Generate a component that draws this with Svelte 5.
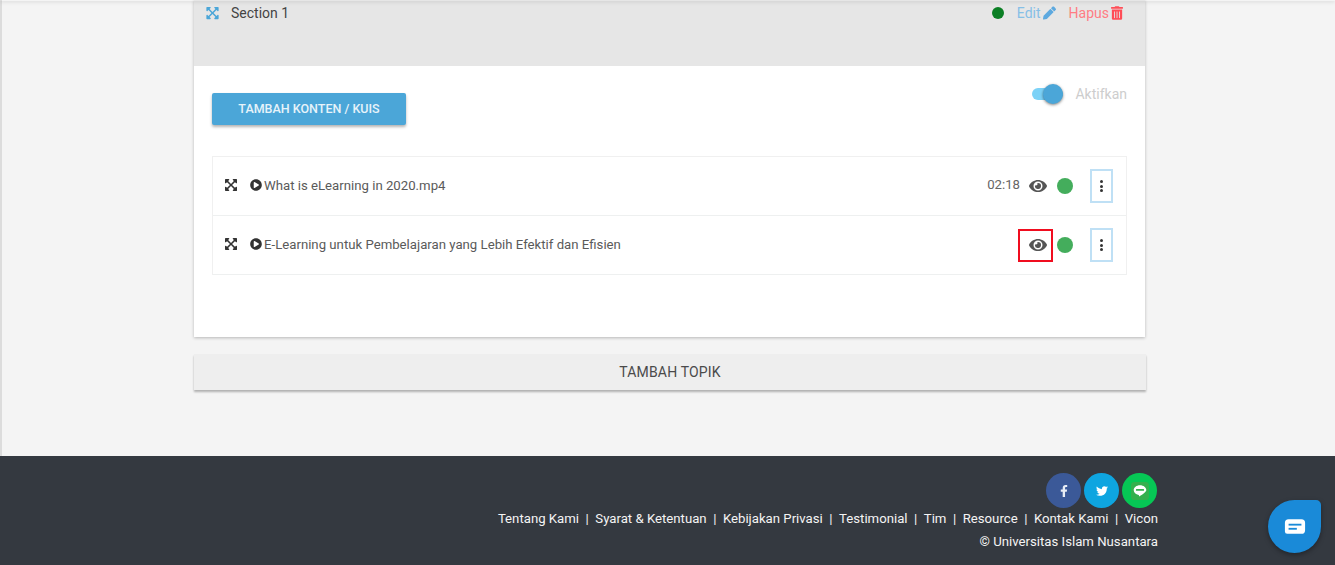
<script>
  const expand = 'M448.1 344v112c0 13.3-10.7 24-24 24h-112c-21.4 0-32.1-25.9-17-41l36.2-36.2L224 295.6 116.8 402.9 153 439c15.1 15.1 4.4 41-17 41H24c-13.3 0-24-10.7-24-24V344c0-21.4 25.9-32.1 41-17l36.2 36.2L184.5 256 77.2 148.7 41 185c-15.1 15.1-41 4.4-41-17V56c0-13.3 10.7-24 24-24h112c21.4 0 32 25.9 17 41l-36.2 36.2L224 216.4l107.3-107.3L295.1 73c-15.1-15.1-4.4-41 17-41h112c13.3 0 24 10.7 24 24v112c0 21.4-25.9 32.1-41 17l-36.2-36.2L263.6 256l107.3 107.3 36.2-36.2c15.1-15.2 41-4.5 41 16.9z';
  const play = 'M256 8C119 8 8 119 8 256s111 248 248 248 248-111 248-248S393 8 256 8zm115.7 272l-176 101c-15.8 8.8-35.7-2.5-35.7-20.9V152c0-18.3 19.8-29.7 35.7-20.9l176 107c16.4 9.2 16.4 32.9 0 41.9z';
  const eye = 'M572.52 241.4C518.29 135.59 410.93 64 288 64S57.68 135.64 3.48 241.41a32.35 32.35 0 0 0 0 29.19C57.71 376.41 165.07 448 288 448s230.32-71.64 284.52-177.41a32.35 32.35 0 0 0 0-29.19zM288 400a144 144 0 1 1 144-144 143.93 143.93 0 0 1-144 144zm0-240a95.31 95.31 0 0 0-25.31 3.79 47.85 47.85 0 0 1-66.9 66.9A95.78 95.78 0 1 0 288 160z';

  const items = [
    { title: 'What is eLearning in 2020.mp4', time: '02:18' },
    { title: 'E-Learning untuk Pembelajaran yang Lebih Efektif dan Efisien', time: '', marked: true }
  ];
  const links = ['Tentang Kami', 'Syarat & Ketentuan', 'Kebijakan Privasi', 'Testimonial', 'Tim', 'Resource', 'Kontak Kami', 'Vicon'];
</script>

<div class="page">
  <main>
    <section class="card">
      <header>
        <svg class="move" viewBox="0 0 448 512"><path d={expand} /></svg>
        <span class="section-name">Section 1</span>
        <span class="status"></span>
        <a class="edit" href="#edit">Edit
          <svg viewBox="0 0 512 512"><path d="M497.9 142.1l-46.1 46.1c-4.7 4.7-12.3 4.7-17 0l-111-111c-4.7-4.7-4.7-12.3 0-17l46.1-46.1c18.7-18.7 49.1-18.7 67.9 0l60.1 60.1c18.8 18.7 18.8 49.1 0 67.9zM284.2 99.8L21.6 362.4.4 483.9c-2.9 16.4 11.4 30.6 27.8 27.8l121.5-21.3 262.6-262.6c4.7-4.7 4.7-12.3 0-17l-111-111c-4.8-4.7-12.4-4.7-17.1 0z" /></svg>
        </a>
        <a class="remove" href="#hapus">Hapus
          <svg viewBox="0 0 448 512"><path d="M32 464a48 48 0 0 0 48 48h288a48 48 0 0 0 48-48V128H32zm272-256a16 16 0 0 1 32 0v224a16 16 0 0 1-32 0zm-96 0a16 16 0 0 1 32 0v224a16 16 0 0 1-32 0zm-96 0a16 16 0 0 1 32 0v224a16 16 0 0 1-32 0zM432 32H312l-9.4-18.7A24 24 0 0 0 281.1 0H166.8a23.72 23.72 0 0 0-21.4 13.3L136 32H16A16 16 0 0 0 0 48v32a16 16 0 0 0 16 16h416a16 16 0 0 0 16-16V48a16 16 0 0 0-16-16z" /></svg>
        </a>
      </header>

      <div class="card-body">
        <div class="toolbar">
          <button class="add-content">TAMBAH KONTEN / KUIS</button>
          <div class="toggle">
            <span class="track"><span class="knob"></span></span>
            <span class="toggle-label">Aktifkan</span>
          </div>
        </div>

        <ul class="list">
          {#each items as item}
            <li>
              <svg class="drag" viewBox="0 0 448 512"><path d={expand} /></svg>
              <svg class="play" viewBox="0 0 512 512"><path d={play} /></svg>
              <span class="title">{item.title}</span>
              {#if item.time}<span class="time">{item.time}</span>{/if}
              <span class="eye-wrap" class:marked={item.marked}>
                <svg class="eye" viewBox="0 0 576 512"><path d={eye} /></svg>
              </span>
              <span class="dot"></span>
              <button class="kebab" aria-label="menu"><i></i><i></i><i></i></button>
            </li>
          {/each}
        </ul>
      </div>
    </section>

    <button class="add-topic">TAMBAH TOPIK</button>
  </main>

  <footer>
    <div class="social">
      <span class="round fb">
        <svg viewBox="0 0 320 512"><path d="M279.14 288l14.22-92.66h-88.91v-60.13c0-25.35 12.42-50.06 52.24-50.06h40.42V6.26S260.43 0 225.36 0c-73.22 0-121.08 44.38-121.08 124.72v70.62H22.89V288h81.39v224h100.17V288z" /></svg>
      </span>
      <span class="round tw">
        <svg viewBox="0 0 512 512"><path d="M459.37 151.716c.325 4.548.325 9.097.325 13.645 0 138.72-105.583 298.558-298.558 298.558-59.452 0-114.68-17.219-161.137-47.106 8.447.974 16.568 1.299 25.34 1.299 49.055 0 94.213-16.568 130.274-44.832-46.132-.975-84.792-31.188-98.112-72.772 6.498.974 12.995 1.624 19.818 1.624 9.421 0 18.843-1.3 27.614-3.573-48.081-9.747-84.143-51.98-84.143-102.985v-1.299c13.969 7.797 30.214 12.67 47.431 13.319-28.264-18.843-46.781-51.005-46.781-87.391 0-19.492 5.197-37.36 14.294-52.954 51.655 63.675 129.3 105.258 216.365 109.807-1.624-7.797-2.599-15.918-2.599-24.04 0-57.828 46.782-104.934 104.934-104.934 30.213 0 57.502 12.67 76.67 33.137 23.715-4.548 46.456-13.32 66.599-25.34-7.798 24.366-24.366 44.833-46.132 57.827 21.117-2.273 41.584-8.122 60.426-16.243-14.292 20.791-32.161 39.308-52.628 54.253z" /></svg>
      </span>
      <span class="round line">
        <svg viewBox="0 0 20 20">
          <rect width="20" height="20" rx="4" fill="#35b04e" />
          <path d="M10 3.5c-4 0-7 2.4-7 5.5 0 2.7 2.3 4.9 5.5 5.4.5.1.4.5.3 1.2 0 .4.2.5.6.3 1.7-1 4-2.5 5.6-3.9 1.3-1 2-2 2-3C17 5.9 14 3.5 10 3.5z" fill="#fff" />
          <rect x="5.5" y="7.8" width="9" height="2" rx=".6" fill="#35b04e" />
        </svg>
      </span>
    </div>
    <nav>
      {#each links as link, i}
        {#if i > 0}<span class="sep">|</span>{/if}
        <a href="#link">{link}</a>
      {/each}
    </nav>
    <div class="copy">© Universitas Islam Nusantara</div>
  </footer>

  <button class="chat" aria-label="chat">
    <svg viewBox="0 0 24 18">
      <path d="M5 1h14a4 4 0 0 1 4 4v8a4 4 0 0 1-4 4H3.5A2.5 2.5 0 0 1 1 14.5V5a4 4 0 0 1 4-4z" fill="#fff" />
      <rect x="5" y="6" width="14" height="2" fill="#1a8ad8" />
      <rect x="5" y="10.5" width="9" height="2" fill="#1a8ad8" />
    </svg>
  </button>
</div>

<style>
  :global(body) {
    margin: 0;
    font-family: Roboto, "Liberation Sans", sans-serif;
    background: #f4f4f4;
  }
  .page {
    height: 565px;
    overflow: hidden;
    position: relative;
  }
  .page::before {
    content: '';
    position: absolute;
    top: 0;
    left: 0;
    right: 0;
    height: 1px;
    box-shadow: 0 0 4px rgba(0, 0, 0, .35);
  }
  main {
    height: 456px;
    box-sizing: border-box;
    padding-left: 192px;
    border-left: 2px solid #dcdcdc;
  }
  .card {
    width: 951px;
    background: #fff;
    box-shadow: 0 1px 3px rgba(0, 0, 0, .25);
  }
  header {
    height: 66px;
    box-sizing: border-box;
    background: #e6e6e6;
    display: flex;
    align-items: flex-start;
    padding: 5px 22px 0 12px;
    font-size: 14px;
    line-height: 16px;
  }
  header svg {
    height: 14px;
    display: block;
  }
  .move {
    fill: #4ba6d8;
    width: 13px;
    margin-top: 1px;
  }
  .section-name {
    margin-left: 12px;
    margin-right: auto;
    color: #444;
  }
  .status {
    width: 12px;
    height: 12px;
    margin-top: 2px;
    border-radius: 50%;
    background: #0b7f24;
  }
  .edit, .remove {
    display: flex;
    align-items: center;
    text-decoration: none;
  }
  .edit {
    gap: 2px;
    margin-left: 13px;
    color: #86bfe6;
  }
  .edit svg {
    width: 13px;
    fill: #5da9df;
  }
  .remove {
    gap: 2px;
    margin-left: 13px;
    color: #ff7d84;
  }
  .remove svg {
    width: 12px;
    fill: #ff4d57;
  }
  .card-body {
    height: 271px;
    box-sizing: border-box;
    padding: 20px 18px 0;
  }
  .toolbar {
    display: flex;
    justify-content: space-between;
    align-items: flex-start;
    height: 70px;
  }
  .add-content {
    width: 194px;
    height: 32px;
    margin-top: 7px;
    border: 0;
    border-radius: 2px;
    background: #4ba6d8;
    color: #e6f3fa;
    font: 500 12.5px/32px Roboto, sans-serif;
    box-shadow: 0 2px 3px rgba(0, 0, 0, .3);
    padding: 0;
  }
  .toggle {
    display: flex;
    align-items: center;
    gap: 12px;
  }
  .track {
    display: block;
    position: relative;
    width: 31px;
    height: 12px;
    border-radius: 6px;
    background: #7cd2f7;
  }
  .knob {
    position: absolute;
    right: 0;
    top: -4px;
    width: 20px;
    height: 20px;
    border-radius: 50%;
    background: #4ba6d8;
    box-shadow: 0 1px 3px rgba(0, 0, 0, .5);
  }
  .toggle-label {
    font-size: 14px;
    color: #cdcdcd;
  }
  .list {
    list-style: none;
    margin: 0;
    padding: 0;
    width: 915px;
    border: 1px solid #f0f0f0;
    border-bottom: 0;
    box-sizing: border-box;
  }
  li {
    height: 59px;
    box-sizing: border-box;
    border-bottom: 1px solid #eef0f0;
    display: flex;
    align-items: center;
    padding: 0 13px 0 12px;
    font-size: 13.2px;
    color: #5a5a5a;
  }
  .drag {
    width: 12px;
    height: 14px;
    fill: #333;
    margin-top: -2px;
  }
  .play {
    width: 12px;
    height: 12px;
    fill: #333;
    margin-left: 13px;
    margin-right: 2px;
    margin-top: -2px;
  }
  .title {
    margin-right: auto;
    margin-top: -2px;
  }
  .time {
    color: #666;
    margin-top: -3px;
    margin-right: -1px;
  }
  .eye-wrap {
    display: flex;
    align-items: center;
    justify-content: center;
    width: 35px;
    height: 33px;
    box-sizing: border-box;
    padding-left: 4px;
    margin-right: 4px;
    margin-left: -1px;
  }
  .eye-wrap.marked {
    outline: 2px solid #f00d1f;
    outline-offset: -2px;
  }
  .eye {
    width: 18px;
    height: 16px;
    fill: #555;
  }
  .dot {
    width: 16px;
    height: 16px;
    border-radius: 50%;
    background: #44ad5c;
    margin-right: 17px;
  }
  .kebab {
    width: 23px;
    height: 34px;
    box-sizing: border-box;
    padding: 0;
    border: 2px solid #bfe0f5;
    background: #fff;
    display: flex;
    flex-direction: column;
    align-items: center;
    justify-content: center;
    gap: 1.5px;
  }
  .kebab i {
    width: 3px;
    height: 3px;
    border-radius: 50%;
    background: #333;
  }
  .add-topic {
    display: block;
    width: 952px;
    height: 36px;
    margin-top: 17px;
    border: 0;
    padding: 1px 0 0;
    background: #eee;
    color: #4a4a4a;
    font: 400 14px/35px Roboto, sans-serif;
    letter-spacing: .17px;
    box-shadow: 0 2px 2px rgba(0, 0, 0, .28);
  }
  footer {
    height: 109px;
    box-sizing: border-box;
    background: #343940;
    padding: 17px 177px 0 0;
    display: flex;
    flex-direction: column;
    align-items: flex-end;
    color: #f4f4f4;
    font-size: 13.2px;
  }
  .social {
    display: flex;
    gap: 3px;
    margin-right: 1px;
  }
  .round {
    width: 35px;
    height: 35px;
    border-radius: 50%;
    display: flex;
    align-items: center;
    justify-content: center;
  }
  .fb { background: #3b5998; }
  .tw { background: #0ea5e0; }
  .line { background: #06c755; }
  .fb svg {
    height: 12px;
    width: 8px;
    fill: #e8edf5;
  }
  .tw svg {
    width: 12px;
    height: 12px;
    fill: #fff;
  }
  .line svg {
    width: 18px;
    height: 18px;
  }
  nav {
    display: flex;
    align-items: center;
    margin-top: 3px;
    line-height: 16px;
  }
  nav a {
    color: inherit;
    text-decoration: none;
  }
  .sep {
    margin: 0 6.5px;
  }
  .copy {
    margin-top: 7px;
    line-height: 15px;
  }
  .chat {
    position: fixed;
    left: 1268px;
    top: 500px;
    width: 53px;
    height: 53px;
    padding: 0;
    border: 0;
    background: #1a8ad8;
    border-radius: 50% 5px 50% 50%;
    box-shadow: 0 2px 5px rgba(0, 0, 0, .35);
    display: flex;
    align-items: center;
    justify-content: center;
  }
  .chat svg {
    width: 22px;
    height: 17px;
  }
</style>
